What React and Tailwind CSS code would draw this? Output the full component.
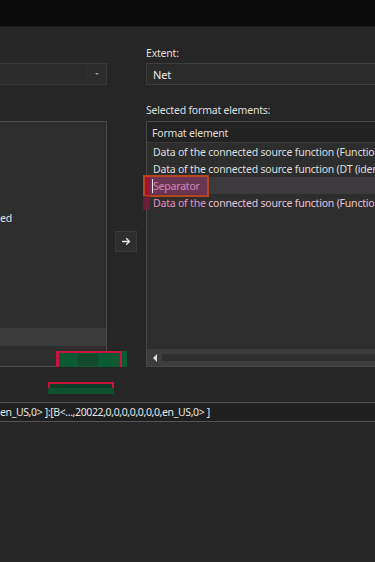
import React from "react";

export default function App() {
  return (
    <div className="w-[375px] h-[562px] overflow-hidden bg-[#262626] text-[#dedede] font-['Noto_Sans',sans-serif] text-[10.5px] leading-none tracking-[-0.2px]">
      {/* top dark bar */}
      <div className="h-[27px] bg-[#0b0b0b] border-b border-[#1c1c1c]" />

      {/* main three columns */}
      <div className="flex w-[520px]">
        {/* left column */}
        <div className="w-[107px] shrink-0 flex flex-col pt-[36px]">
          <div className="h-[22px] flex bg-[#2c2c2c] border border-l-0 border-[#383838]">
            <div className="flex-1 border-r border-[#303030]" />
            <div className="w-[18px] flex items-center justify-center">
              <div className="w-0 h-0 border-l-[2px] border-r-[2px] border-t-[2px] border-l-transparent border-r-transparent border-t-[#9a9a9a]" />
            </div>
          </div>
          <div className="mt-[36px] h-[246px] flex flex-col bg-[#2d2d2d] border border-l-0 border-[#4a4a4a] relative">
            <div className="h-[88px]" />
            <div className="h-[17px] flex items-center text-[#e4e4e4]">ed</div>
            <div className="h-[101px]" />
            <div className="h-[18px] bg-[#3b3b3b]" />
            <div className="flex-1" />
          </div>
        </div>

        {/* middle column with arrow button */}
        <div className="w-[39px] shrink-0 flex flex-col pt-[204px] pl-[8px]">
          <div className="w-[22px] h-[21px] bg-[#2e2e2e] border border-[#393939] flex items-center justify-center text-[#e6e6e6]">
            <svg width="10" height="9" viewBox="0 0 10 9" fill="none" stroke="#e8e8e8" strokeWidth="1.3">
              <path d="M1 4.5H8.5M5.2 1.2L8.5 4.5L5.2 7.8" />
            </svg>
          </div>
        </div>

        {/* right column */}
        <div className="w-[300px] shrink-0 flex flex-col">
          <div className="h-[36px] flex items-end pb-[5px]">Extent:</div>
          <div className="h-[22px] flex items-center px-[6px] bg-[#2b2b2b] border border-[#3d3d3d] text-[#ececec] text-[11px]">Net</div>
          <div className="h-[36px] flex items-center pt-[14px]">Selected format elements:</div>
          <div className="h-[246px] flex flex-col bg-[#2d2d2d] border border-[#474747] relative">
            <div className="h-[21px] shrink-0 flex items-center px-[5px] pt-[2px] bg-[#222222] border-b border-[#3a3a3a]">Format element</div>
            <div className="h-[17px] shrink-0 flex items-center px-[6px] pt-[2px] whitespace-nowrap">Data of the connected source function (Function</div>
            <div className="h-[17px] shrink-0 flex items-center px-[6px] pt-[2px] whitespace-nowrap">Data of the connected source function (DT (identifier)</div>
            <div className="h-[17px] shrink-0 flex items-center pl-[6px] pt-[2px] bg-[#3d3a3e] whitespace-nowrap relative">
              <span className="text-[#f3cbe6]">Separator</span>
            </div>
            <div className="h-[17px] shrink-0 flex items-center px-[6px] pt-[2px] whitespace-nowrap">
              <span className="text-[#e98fbe]">Data of the&nbsp;</span>
              <span className="text-[#e9c3d8]">connected source function (Function</span>
            </div>
            <div className="flex-1" />
            {/* horizontal scrollbar */}
            <div className="h-[17px] shrink-0 bg-[#3c3c3c] flex items-center pl-[6px] gap-[5px]">
              <div className="w-0 h-0 border-t-[4px] border-b-[4px] border-r-[4px] border-t-transparent border-b-transparent border-r-[#dcdcdc]" />
              <div className="flex-1 h-[7px] bg-[#2f2f2f]" />
            </div>

            {/* annotation overlay on Separator */}
            <div className="absolute left-[-4px] top-[53px] w-[66px] h-[22px] border-2 border-[#b4461f] bg-[#a0306a]/45 flex">
              <div className="w-[5px] h-full bg-[#a5102e]" />
            </div>
            <div className="absolute left-[-4px] top-[74px] w-[7px] h-[14px] bg-[#7a1838]/80" />
            <div className="absolute left-[5px] top-[57px] w-px h-[14px] bg-[#f0e0ea]" />
          </div>
        </div>
      </div>

      {/* red / green annotation marks */}
      <div className="relative h-[0px]">
        <div className="absolute left-[56px] top-[-16px] w-[71px] h-[16px] bg-[#0b5a33]">
          <div className="absolute left-0 top-0 w-[66px] h-[16px] border-l-[3px] border-t-[2px] border-r-[2px] border-[#c8143c]" />
          <div className="absolute left-[22px] top-[3px] w-[20px] h-[12px] bg-[#134a2e]" />
        </div>
        <div className="absolute left-[48px] top-[15px] w-[66px] h-[12px]">
          <div className="h-[6px] border-t-[2px] border-l-[2px] border-r-[2px] border-[#c8143c] bg-[#0d3d26]" />
          <div className="h-[6px] bg-[#0b5a33]/80" />
        </div>
      </div>

      {/* bottom text field */}
      <div className="mt-[35px] h-[20px] bg-[#1f1f1f] border-y border-[#555555] flex items-center whitespace-nowrap text-[#e6e6e6] tracking-[-0.38px]">
        en_US,0&gt; ]:[B&lt;...,20022,0,0,0,0,0,0,0,en_US,0&gt; ]
      </div>
    </div>
  );
}
